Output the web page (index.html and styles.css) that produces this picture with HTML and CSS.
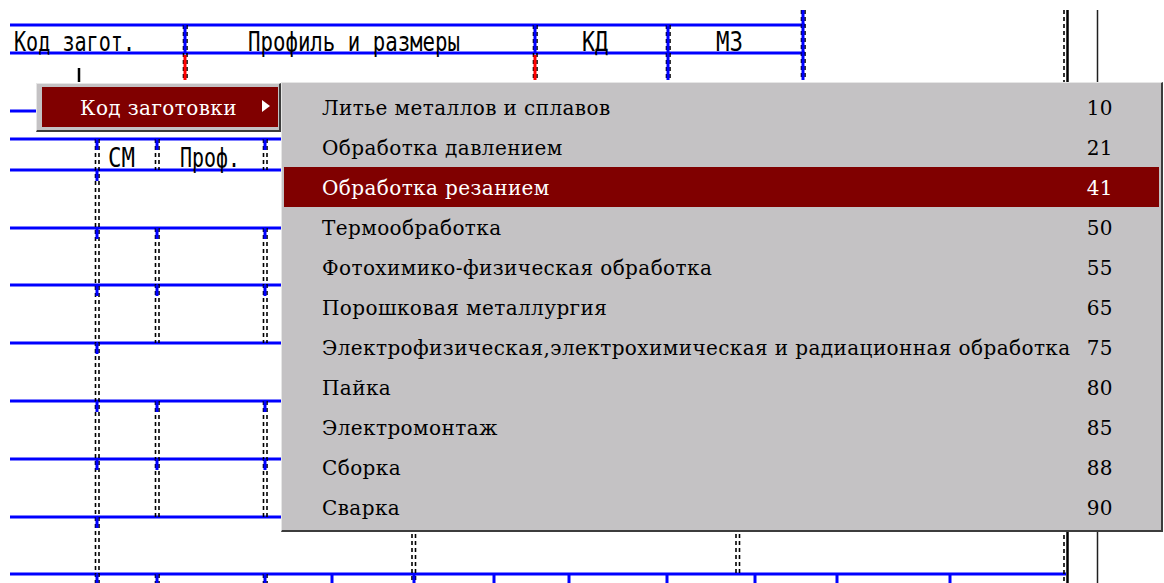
FILE: index.html
```
<!DOCTYPE html>
<html lang="ru">
<head>
<meta charset="utf-8">
<title>Код заготовки</title>
<link rel="stylesheet" href="styles.css">
</head>
<body>
<div class="sheet">
  <svg class="drawing" width="1164" height="583" viewBox="0 0 1164 583">
    <!-- table rulings -->
    <g class="hline">
      <line x1="10" y1="25" x2="805" y2="25"/>
      <line x1="10" y1="53" x2="805" y2="53"/>
      <line x1="10" y1="111" x2="40" y2="111"/>
      <line x1="10" y1="139" x2="300" y2="139"/>
      <line x1="10" y1="170" x2="300" y2="170"/>
      <line x1="10" y1="228" x2="300" y2="228"/>
      <line x1="10" y1="285" x2="300" y2="285"/>
      <line x1="10" y1="343" x2="300" y2="343"/>
      <line x1="10" y1="401" x2="300" y2="401"/>
      <line x1="10" y1="459" x2="300" y2="459"/>
      <line x1="10" y1="517" x2="300" y2="517"/>
      <line x1="10" y1="574" x2="1066" y2="574"/>
    </g>

    <!-- dashed column borders -->
    <g class="dash">
      <line x1="183.5" y1="25" x2="183.5" y2="80"/><line x1="187" y1="25" x2="187" y2="80"/>
      <line x1="533.5" y1="25" x2="533.5" y2="80"/><line x1="537" y1="25" x2="537" y2="80"/>
      <line x1="666.5" y1="25" x2="666.5" y2="80"/><line x1="670" y1="25" x2="670" y2="80"/>
      <line x1="801.5" y1="10" x2="801.5" y2="80"/><line x1="805" y1="10" x2="805" y2="80"/>

      <line x1="95.5" y1="139" x2="95.5" y2="583"/><line x1="99" y1="139" x2="99" y2="583"/>

      <line x1="155.5" y1="139" x2="155.5" y2="170"/><line x1="159" y1="139" x2="159" y2="170"/>
      <line x1="155.5" y1="228" x2="155.5" y2="343"/><line x1="159" y1="228" x2="159" y2="343"/>
      <line x1="155.5" y1="401" x2="155.5" y2="517"/><line x1="159" y1="401" x2="159" y2="517"/>
      <line x1="155.5" y1="574" x2="155.5" y2="583"/><line x1="159" y1="574" x2="159" y2="583"/>

      <line x1="263.5" y1="139" x2="263.5" y2="170"/><line x1="267" y1="139" x2="267" y2="170"/>
      <line x1="263.5" y1="228" x2="263.5" y2="343"/><line x1="267" y1="228" x2="267" y2="343"/>
      <line x1="263.5" y1="401" x2="263.5" y2="517"/><line x1="267" y1="401" x2="267" y2="517"/>
      <line x1="263.5" y1="574" x2="263.5" y2="583"/><line x1="267" y1="574" x2="267" y2="583"/>

      <line x1="412" y1="520" x2="412" y2="583"/><line x1="415.5" y1="520" x2="415.5" y2="583"/>
      <line x1="736" y1="520" x2="736" y2="574"/><line x1="739.5" y1="520" x2="739.5" y2="574"/>

      <line x1="1064" y1="10" x2="1064" y2="583"/>
    </g>

    <!-- blue stems under each ruling -->
    <g class="stem">
      <line x1="185" y1="25" x2="185" y2="53"/>
      <line x1="535" y1="25" x2="535" y2="53"/>
      <line x1="668" y1="25" x2="668" y2="80"/>
      <line x1="803" y1="10" x2="803" y2="80"/>

      <line x1="97" y1="139" x2="97" y2="150"/>
      <line x1="97" y1="170" x2="97" y2="181"/>
      <line x1="97" y1="228" x2="97" y2="239"/>
      <line x1="97" y1="285" x2="97" y2="296"/>
      <line x1="97" y1="343" x2="97" y2="354"/>
      <line x1="97" y1="401" x2="97" y2="412"/>
      <line x1="97" y1="459" x2="97" y2="470"/>
      <line x1="97" y1="517" x2="97" y2="528"/>
      <line x1="97" y1="574" x2="97" y2="583"/>

      <line x1="157" y1="139" x2="157" y2="150"/>
      <line x1="157" y1="228" x2="157" y2="239"/>
      <line x1="157" y1="285" x2="157" y2="296"/>
      <line x1="157" y1="401" x2="157" y2="412"/>
      <line x1="157" y1="459" x2="157" y2="470"/>
      <line x1="157" y1="574" x2="157" y2="583"/>

      <line x1="265" y1="139" x2="265" y2="150"/>
      <line x1="265" y1="228" x2="265" y2="239"/>
      <line x1="265" y1="285" x2="265" y2="296"/>
      <line x1="265" y1="401" x2="265" y2="412"/>
      <line x1="265" y1="459" x2="265" y2="470"/>
      <line x1="265" y1="574" x2="265" y2="583"/>

      <line x1="332" y1="574" x2="332" y2="583"/>
      <line x1="414" y1="574" x2="414" y2="583"/>
      <line x1="494" y1="574" x2="494" y2="583"/>
      <line x1="569" y1="574" x2="569" y2="583"/>
      <line x1="667" y1="574" x2="667" y2="583"/>
      <line x1="755" y1="574" x2="755" y2="583"/>
      <line x1="837" y1="574" x2="837" y2="583"/>
      <line x1="950" y1="574" x2="950" y2="583"/>
    </g>

    <g class="red">
      <line x1="185" y1="55" x2="185" y2="80"/>
      <line x1="535" y1="55" x2="535" y2="80"/>
    </g>

    <g class="ink">
      <line x1="79" y1="68" x2="79" y2="82"/>
      <line x1="1067.5" y1="10" x2="1067.5" y2="583"/>
    </g>
    <line class="frame" x1="1097.5" y1="10" x2="1097.5" y2="583"/>

    <!-- column captions -->
    <g class="caption">
      <text x="14" y="51" textLength="121" lengthAdjust="spacingAndGlyphs">Код загот.</text>
      <text x="248" y="51" textLength="212" lengthAdjust="spacingAndGlyphs">Профиль и размеры</text>
      <text x="582" y="51" textLength="26" lengthAdjust="spacingAndGlyphs">КД</text>
      <text x="716" y="51" textLength="27" lengthAdjust="spacingAndGlyphs">МЗ</text>
      <text x="108" y="167" textLength="27" lengthAdjust="spacingAndGlyphs">СМ</text>
      <text x="180" y="167" textLength="60" lengthAdjust="spacingAndGlyphs">Проф.</text>
    </g>
  </svg>

  <div class="menu menu-main">
    <div class="item active">
      <span>Код заготовки</span>
      <span class="arrow"></span>
    </div>
  </div>

  <div class="menu menu-sub">
    <div class="item"><span>Литье металлов и сплавов</span><span>10</span></div>
    <div class="item"><span>Обработка давлением</span><span>21</span></div>
    <div class="item active"><span>Обработка резанием</span><span>41</span></div>
    <div class="item"><span>Термообработка</span><span>50</span></div>
    <div class="item"><span>Фотохимико-физическая обработка</span><span>55</span></div>
    <div class="item"><span>Порошковая металлургия</span><span>65</span></div>
    <div class="item"><span>Электрофизическая,электрохимическая и радиационная обработка</span><span>75</span></div>
    <div class="item"><span>Пайка</span><span>80</span></div>
    <div class="item"><span>Электромонтаж</span><span>85</span></div>
    <div class="item"><span>Сборка</span><span>88</span></div>
    <div class="item"><span>Сварка</span><span>90</span></div>
  </div>
</div>
</body>
</html>
```

FILE: styles.css
```
html, body {
  margin: 0;
  padding: 0;
  background: #ffffff;
}

.sheet {
  position: relative;
  width: 1164px;
  height: 583px;
  overflow: hidden;
  background: #ffffff;
}

.drawing {
  display: block;
}

.hline line {
  stroke: #0000ff;
  stroke-width: 3;
}

.dash line {
  stroke: #000000;
  stroke-width: 1.6;
  stroke-dasharray: 4 3;
}

.stem line {
  stroke: #0000ff;
  stroke-width: 3;
}

.red line {
  stroke: #ff0000;
  stroke-width: 3;
}

.ink line {
  stroke: #000000;
  stroke-width: 2.5;
}

.frame {
  stroke: #202020;
  stroke-width: 1.5;
}

.caption text {
  font-family: "DejaVu Sans Mono", monospace;
  font-size: 26px;
  fill: #000000;
}

/* popup menus */
.menu {
  position: absolute;
  box-sizing: border-box;
  background: #c4c2c4;
  border-style: solid;
  border-color: #e6e6e6 #3c3c3c #3c3c3c #e6e6e6;
  border-width: 1px 2px 2px 1px;
  font-family: "DejaVu Serif", "Liberation Serif", serif;
  font-size: 20px;
  letter-spacing: 0.4px;
  color: #000000;
}

.menu-main {
  left: 36px;
  top: 83px;
  width: 245px;
  padding: 3px 1px 3px 5px;
}

.menu-sub {
  left: 281px;
  top: 82px;
  width: 882px;
  height: 450px;
  padding: 4px 2px 3px 2px;
}

.item {
  display: flex;
  align-items: center;
  justify-content: space-between;
  height: 40px;
  padding: 2px 46px 0 38px;
  box-sizing: border-box;
  white-space: nowrap;
}

.menu-main .item {
  padding: 2px 8px 0 38px;
}

.item.active {
  background: #800000;
  color: #ffffff;
}

.arrow {
  width: 0;
  height: 0;
  border-top: 6px solid transparent;
  border-bottom: 6px solid transparent;
  border-left: 8px solid #ffffff;
  margin-top: -4px;
}
```
